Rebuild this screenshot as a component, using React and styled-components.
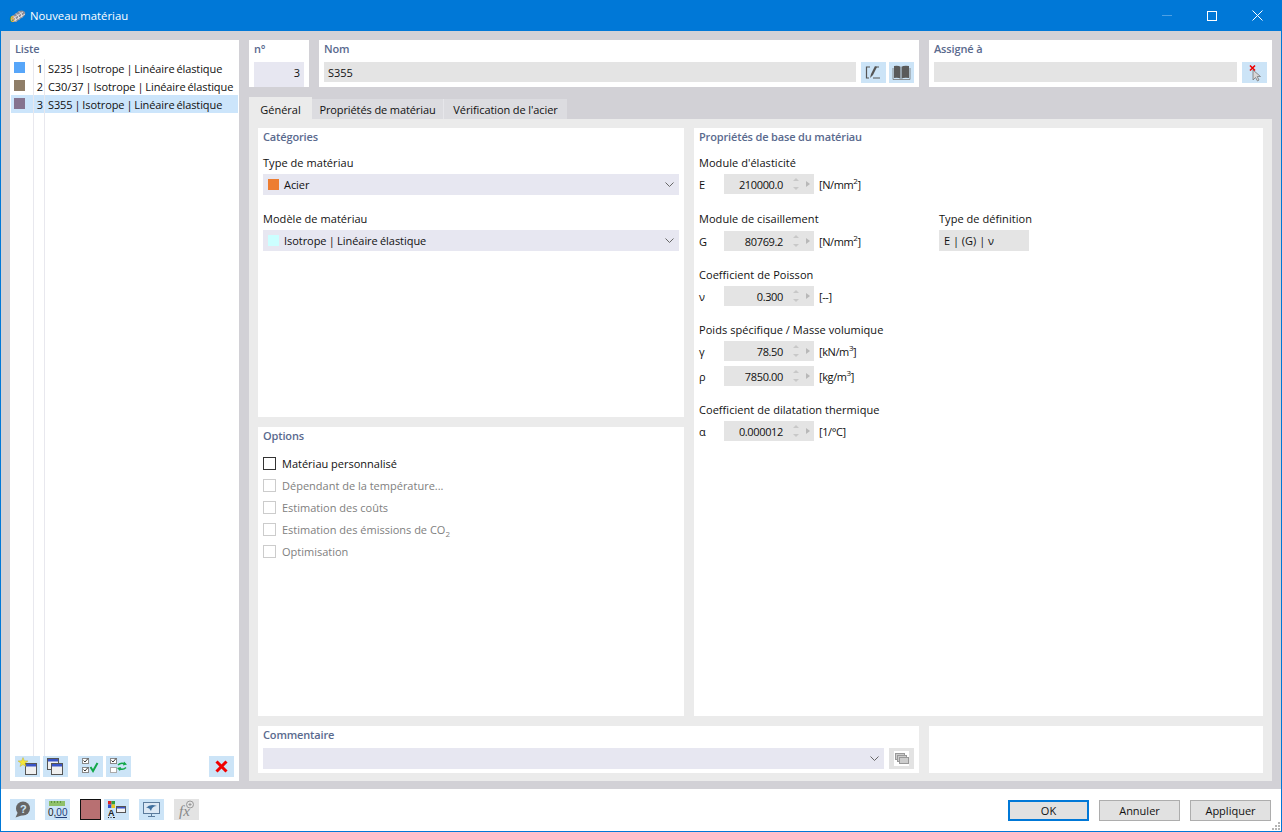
import React from "react";
import styled, { createGlobalStyle } from "styled-components";

const Global = createGlobalStyle`
    html, body {
        margin: 0;
        padding: 0;
        background: #ffffff;
    }
    #root {
        width: 1282px;
        height: 832px;
    }
`;

const Window = styled.div`
    width: 1282px;
    height: 832px;
    box-sizing: border-box;
    border: 1px solid #0078d7;
    border-top: none;
    display: flex;
    flex-direction: column;
    font-family: "Open Sans", "Noto Sans", sans-serif;
    font-size: 11px;
    color: #111;
    overflow: hidden;
`;

const TitleBar = styled.div`
    height: 31px;
    flex: none;
    margin: 0 -1px;
    background: #0078d7;
    color: #fff;
    display: flex;
    align-items: center;
    padding: 0 2px 0 9px;
    font-size: 11.3px;
`;

const TitleText = styled.span`
    margin-left: 4px;
    flex: 1;
`;

const WinButton = styled.div`
    width: 45px;
    height: 31px;
    box-sizing: border-box;
    padding-right: ${(p) => (p.$nudge ? 1 : 0)}px;
    display: flex;
    align-items: center;
    justify-content: center;
`;

const Body = styled.div`
    flex: 1;
    background: #d2d1d6;
    display: flex;
    gap: 10px;
    padding: 9px 9px 8px 9px;
    min-height: 0;
`;

const ListPanel = styled.div`
    width: 229px;
    flex: none;
    background: #fff;
    display: flex;
    flex-direction: column;
`;

const SectionTitle = styled.div`
    color: #5a6a8e;
    font-weight: 600;
    letter-spacing: -0.15px;
    line-height: 17px;
    height: 17px;
`;

const ListTitle = styled(SectionTitle)`
    padding-left: 5px;
`;

const ListRows = styled.div`
    flex: 1;
    margin: 2px 1px 0 1px;
    position: relative;
`;

const Guides = styled.div`
    position: absolute;
    top: 0;
    bottom: 0;
    left: 22px;
    width: 10px;
    border-left: 1px solid #e8e8ee;
    border-right: 1px solid #e8e8ee;
`;

const ListRow = styled.div`
    position: relative;
    height: 18px;
    display: flex;
    align-items: center;
    background: ${(p) => (p.$selected ? "#cce5fb" : "transparent")};
`;

const Swatch = styled.span`
    width: 11px;
    height: 11px;
    margin-left: 3px;
    align-self: flex-start;
    margin-top: 3px;
    flex: none;
    background: ${(p) => p.$color};
`;

const RowNumber = styled.span`
    width: 18px;
    text-align: right;
    flex: none;
`;

const RowName = styled.span`
    margin-left: 5px;
    white-space: nowrap;
    letter-spacing: -0.1px;
    word-spacing: -0.8px;
`;

const ListTools = styled.div`
    display: flex;
    align-items: center;
    height: 21px;
    padding: 0 5px;
    margin-bottom: 4px;
`;

const IconButton = styled.div`
    width: 25px;
    height: 21px;
    flex: none;
    background: ${(p) => (p.$off ? "#e3e3e3" : "#cce4f7")};
    display: flex;
    align-items: center;
    justify-content: center;
    margin-left: ${(p) => p.$ml || 0}px;
`;

const Main = styled.div`
    flex: 1;
    min-width: 0;
    display: flex;
    flex-direction: column;
`;

const TopRow = styled.div`
    display: flex;
    gap: 10px;
    height: 47px;
    flex: none;
`;

const TopCard = styled.div`
    background: #fff;
    display: flex;
    flex-direction: column;
    width: ${(p) => (p.$w ? p.$w + "px" : "auto")};
    flex: ${(p) => (p.$w ? "none" : 1)};
    padding: 0 5px;
    box-sizing: border-box;
`;

const CardTitle = styled(SectionTitle)`
    margin-bottom: 5px;
`;

const InputRow = styled.div`
    display: flex;
    gap: 5px;
`;

const TextField = styled.div`
    flex: 1;
    height: 20px;
    line-height: 22px;
    padding: 0 4px;
    background: ${(p) => (p.$blue ? "#e7e7f1" : "#e4e4e4")};
    text-align: ${(p) => (p.$right ? "right" : "left")};
`;

const TabStrip = styled.div`
    display: flex;
    align-items: flex-end;
    height: 32px;
    flex: none;
`;

const Tab = styled.div`
    width: ${(p) => p.$w}px;
    height: ${(p) => (p.$active ? 22 : 20)}px;
    line-height: ${(p) => (p.$active ? 26 : 22)}px;
    box-sizing: border-box;
    text-align: center;
    letter-spacing: ${(p) => (p.$active ? 0 : -0.1)}px;
    background: ${(p) => (p.$active ? "#ebebeb" : "#dcdce0")};
    border-left: ${(p) => (p.$split ? "1px solid #e6e6ea" : "none")};
    white-space: nowrap;
`;

const TabBody = styled.div`
    flex: 1;
    min-height: 0;
    background: #ebebeb;
    padding: 9px 9px 8px 9px;
    display: grid;
    grid-template-columns: 426px 1fr;
    grid-template-rows: 289px 289px 47px;
    gap: 10px;
`;

const Card = styled.div`
    background: #fff;
    padding: 0 5px;
    min-width: 0;
`;

const PropsCard = styled(Card)`
    grid-column: 2;
    grid-row: 1 / span 2;
`;

const CommentRow = styled.div`
    grid-column: 1 / span 2;
    display: grid;
    grid-template-columns: 661px 1fr;
    gap: 10px;
`;

const FieldLabel = styled.div`
    line-height: 16px;
    letter-spacing: 0.05px;
    margin-top: ${(p) => p.$mt || 0}px;
    margin-bottom: ${(p) => p.$mb || 3}px;
`;

const Combo = styled.div`
    height: 21px;
    background: #e7e7f1;
    display: flex;
    align-items: center;
    padding-left: 5px;
    flex: ${(p) => (p.$grow ? 1 : "none")};
`;

const ComboSwatch = styled.span`
    width: 11px;
    height: 11px;
    background: ${(p) => p.$color};
    margin-right: 5px;
`;

const ComboText = styled.span`
    flex: 1;
    letter-spacing: -0.05px;
    word-spacing: -0.5px;
`;

const ChevronIcon = styled.svg`
    width: 9px;
    height: 5px;
    margin-right: 5px;
`;

const Chevron = () => (
    <ChevronIcon viewBox="0 0 9 5">
        <path d="M0.5 0.5 L4.5 4.5 L8.5 0.5" fill="none" stroke="#666" strokeWidth="1" />
    </ChevronIcon>
);

const OptionList = styled.div`
    margin-top: 11px;
    display: flex;
    flex-direction: column;
    gap: 6px;
`;

const OptionRow = styled.div`
    display: flex;
    align-items: center;
    height: 16px;
    color: ${(p) => (p.$off ? "#808080" : "#111")};
    sub {
        font-size: 8px;
        line-height: 0;
    }
`;

const Check = styled.span`
    width: 11px;
    height: 11px;
    border: 1px solid ${(p) => (p.$off ? "#cccccc" : "#333333")};
    margin-right: 6px;
`;

const SplitRow = styled.div`
    display: grid;
    grid-template-columns: 240px 1fr;
`;

const ValueRow = styled.div`
    display: flex;
    align-items: center;
    height: 20px;
    margin-top: ${(p) => p.$mt || 0}px;
`;

const Symbol = styled.span`
    width: 25px;
    flex: none;
`;

const Spin = styled.div`
    width: 90px;
    height: 20px;
    background: #e4e4e4;
    display: flex;
    align-items: center;
    justify-content: flex-end;
    flex: none;
    letter-spacing: -0.35px;
`;

const SpinArrows = styled.svg`
    width: 24px;
    height: 14px;
    margin: 0 3px 0 4px;
    flex: none;
`;

const Unit = styled.span`
    margin-left: 5px;
    white-space: nowrap;
    letter-spacing: -0.4px;
    sup {
        font-size: 8px;
        line-height: 0;
    }
`;

const DefField = styled.div`
    width: 90px;
    height: 21px;
    line-height: 21px;
    padding-left: 5px;
    box-sizing: border-box;
    background: #e4e4e4;
`;

const Footer = styled.div`
    height: 42px;
    box-sizing: border-box;
    flex: none;
    display: flex;
    align-items: flex-start;
    padding: 10px 10px 0 9px;
    position: relative;
`;

const ColorChip = styled.div`
    width: 19px;
    height: 19px;
    background: #b87072;
    border: 1px solid #111;
    flex: none;
    margin-left: 10px;
`;

const Spacer = styled.div`
    flex: 1;
`;

const DialogButton = styled.div`
    text-align: center;
    background: #e1e1e1;
    border: ${(p) => (p.$primary ? "2px solid #0078d7" : "1px solid #adadad")};
    margin-top: 1px;
    margin-left: ${(p) => p.$ml || 0}px;
    height: ${(p) => (p.$primary ? 17 : 19)}px;
    width: ${(p) => (p.$primary ? 77 : 79)}px;
    line-height: ${(p) => (p.$primary ? 18 : 20)}px;
`;

const Grip = styled.svg`
    position: absolute;
    right: 0;
    bottom: 0;
`;

const arrows = (
    <SpinArrows viewBox="0 0 24 14">
        <path d="M6 4 L9 1 L12 4 Z" fill="#c8c8c8" />
        <path d="M6 10 L9 13 L12 10 Z" fill="#c8c8c8" />
        <path d="M19 4 L23 7 L19 10 Z" fill="#b8b8b8" />
    </SpinArrows>
);

const materials = [
    { n: 1, color: "#57a6f9", name: "S235 | Isotrope | Linéaire élastique" },
    { n: 2, color: "#8f7e68", name: "C30/37 | Isotrope | Linéaire élastique" },
    { n: 3, color: "#85738f", name: "S355 | Isotrope | Linéaire élastique", selected: true },
];

const options = [
    "Dépendant de la température...",
    "Estimation des coûts",
    <span>Estimation des émissions de CO<sub>2</sub></span>,
    "Optimisation",
];

const Value = ({ symbol, value, unit, mt }) => (
    <ValueRow $mt={mt}>
        <Symbol>{symbol}</Symbol>
        <Spin>
            {value}
            {arrows}
        </Spin>
        <Unit>{unit}</Unit>
    </ValueRow>
);

const Icon = ({ children }) => (
    <svg width="21" height="19" viewBox="0 0 21 19">
        {children}
    </svg>
);

const win = (x, y) => (
    <g transform={`translate(${x} ${y})`}>
        <rect x="0.5" y="0.5" width="11" height="11" fill="#f0f0f0" stroke="#555" />
        <rect x="1" y="1" width="10" height="2.5" fill="#3a55c8" />
    </g>
);

export default function App() {
    return (
        <>
            <Global />
            <Window>
                <TitleBar>
                    <svg width="17" height="19" viewBox="0 0 17 19">
                        <g transform="translate(0 3)">
                            <path d="M2 8 L10 2 Q14 0.5 16 3 Q17 6 14 8 L7 13 Q3 13 2 8 Z" fill="#8b8b96" />
                            <path d="M4 6.5 Q7 8 7 12.5 M7 4.5 Q10 6 10 10.5 M10 2.5 Q13 4 13 8.5 M3 10 L14 3 M5 12 L16 5" fill="none" stroke="#e6e6ea" strokeWidth="0.9" />
                        </g>
                        <text x="1" y="16" fontSize="8.5" fontWeight="700" fill="#e8b92e" fontFamily="Liberation Sans">6</text>
                    </svg>
                    <TitleText>Nouveau matériau</TitleText>
                    <WinButton $nudge>
                        <svg width="10" height="1"><rect width="10" height="1" fill="#4da0e4" /></svg>
                    </WinButton>
                    <WinButton $nudge>
                        <svg width="10" height="10"><rect x="0.5" y="0.5" width="9" height="9" fill="none" stroke="#fff" /></svg>
                    </WinButton>
                    <WinButton>
                        <svg width="11" height="11"><path d="M0.5 0.5 L10.5 10.5 M10.5 0.5 L0.5 10.5" stroke="#fff" /></svg>
                    </WinButton>
                </TitleBar>
                <Body>
                    <ListPanel>
                        <ListTitle>Liste</ListTitle>
                        <ListRows>
                            {materials.map((m) => (
                                <ListRow key={m.n} $selected={m.selected}>
                                    <Swatch $color={m.color} />
                                    <RowNumber>{m.n}</RowNumber>
                                    <RowName>{m.name}</RowName>
                                </ListRow>
                            ))}
                            <Guides />
                        </ListRows>
                        <ListTools>
                            <IconButton>
                                <Icon>
                                    {win(8, 6)}
                                    <path d="M6 0.5 L7.3 3.8 L11 4 L8 6.2 L9 9.5 L6 7.6 L3 9.5 L4 6.2 L1 4 L4.7 3.8 Z" fill="#f5e63a" stroke="#b8a520" strokeWidth="0.4" />
                                </Icon>
                            </IconButton>
                            <IconButton $ml={3}>
                                <Icon>
                                    {win(2, 1)}
                                    {win(6, 6)}
                                </Icon>
                            </IconButton>
                            <IconButton $ml={10}>
                                <Icon>
                                    <rect x="2.5" y="1.5" width="6" height="5" fill="#fff" stroke="#888" />
                                    <rect x="2.5" y="10.5" width="6" height="5" fill="#fff" stroke="#888" />
                                    <path d="M3.5 3.5 L5 5 L8 1.5 M3.5 12.5 L5 14 L8 10.5" fill="none" stroke="#333" />
                                    <path d="M10.5 10 L13 14 L17.5 6" fill="none" stroke="#13a84a" strokeWidth="2" />
                                </Icon>
                            </IconButton>
                            <IconButton $ml={3}>
                                <Icon>
                                    <rect x="2.5" y="1.5" width="6" height="5" fill="#fff" stroke="#888" />
                                    <rect x="2.5" y="10.5" width="6" height="5" fill="#fff" stroke="#aaa" />
                                    <path d="M3.5 3.5 L5 5 L8 1.5" fill="none" stroke="#333" />
                                    <path d="M10 8 Q13 5 17 7 M18 10.5 Q15 13.5 11 11.5" fill="none" stroke="#13a84a" strokeWidth="1.6" />
                                    <path d="M16 4.5 L19 7.5 L15 8.5 Z M12 14 L9 11 L13 10 Z" fill="#13a84a" />
                                </Icon>
                            </IconButton>
                            <Spacer />
                            <IconButton>
                                <svg width="13" height="13" viewBox="0 0 13 13">
                                    <path d="M1.5 1.5 L11.5 11.5 M11.5 1.5 L1.5 11.5" stroke="#f00000" strokeWidth="3" />
                                </svg>
                            </IconButton>
                        </ListTools>
                    </ListPanel>
                    <Main>
                        <TopRow>
                            <TopCard $w={60}>
                                <CardTitle>n°</CardTitle>
                                <TextField $blue $right>3</TextField>
                            </TopCard>
                            <TopCard $w={600}>
                                <CardTitle>Nom</CardTitle>
                                <InputRow>
                                    <TextField>S355</TextField>
                                    <IconButton>
                                        <Icon>
                                            <path d="M7 4 H3.5 V15 H6 M10 15 H17 M13 4 H16" fill="none" stroke="#555" strokeWidth="1.2" />
                                            <path d="M7 15 L8 11 L12 3 L14 4 L10 12 Z" fill="#555" />
                                        </Icon>
                                    </IconButton>
                                    <IconButton $ml={-2}>
                                        <Icon>
                                            <path d="M10 4 Q7 2 3 3 V15 Q7 14 10 16 Q13 14 18 15 V3 Q13 2 10 4 Z" fill="#5a5a5a" />
                                            <path d="M10 4 V16" stroke="#cce4f7" strokeWidth="1" />
                                            <path d="M2 5 V16.5 H19 V5" fill="none" stroke="#777" strokeWidth="0.8" />
                                        </Icon>
                                    </IconButton>
                                </InputRow>
                            </TopCard>
                            <TopCard>
                                <CardTitle>Assigné à</CardTitle>
                                <InputRow>
                                    <TextField />
                                    <IconButton>
                                        <Icon>
                                            <path d="M9 7 L9 17 L11.5 14.5 L13.5 18 L15 17 L13.2 13.5 L16.5 13.5 Z" fill="#d8d8d8" stroke="#777" strokeWidth="0.8" />
                                            <path d="M6 2.5 L11 7.5 M11 2.5 L6 7.5" stroke="#ee0000" strokeWidth="1.6" />
                                        </Icon>
                                    </IconButton>
                                </InputRow>
                            </TopCard>
                        </TopRow>
                        <TabStrip>
                            <Tab $active $w={63}>Général</Tab>
                            <Tab $w={131}>Propriétés de matériau</Tab>
                            <Tab $split $w={124}>Vérification de l'acier</Tab>
                        </TabStrip>
                        <TabBody>
                            <Card>
                                <SectionTitle>Catégories</SectionTitle>
                                <FieldLabel $mt={10}>Type de matériau</FieldLabel>
                                <Combo>
                                    <ComboSwatch $color="#ed7d31" />
                                    <ComboText>Acier</ComboText>
                                    <Chevron />
                                </Combo>
                                <FieldLabel $mt={16}>Modèle de matériau</FieldLabel>
                                <Combo>
                                    <ComboSwatch $color="#ccffff" />
                                    <ComboText>Isotrope | Linéaire élastique</ComboText>
                                    <Chevron />
                                </Combo>
                            </Card>
                            <PropsCard>
                                <SectionTitle>Propriétés de base du matériau</SectionTitle>
                                <FieldLabel $mt={10}>Module d'élasticité</FieldLabel>
                                <Value symbol="E" value="210000.0" unit={<>[N/mm<sup>2</sup>]</>} />
                                <SplitRow>
                                    <div>
                                        <FieldLabel $mt={17} $mb={4}>Module de cisaillement</FieldLabel>
                                        <Value symbol="G" value="80769.2" unit={<>[N/mm<sup>2</sup>]</>} />
                                    </div>
                                    <div>
                                        <FieldLabel $mt={17}>Type de définition</FieldLabel>
                                        <DefField>E | (G) | ν</DefField>
                                    </div>
                                </SplitRow>
                                <FieldLabel $mt={16}>Coefficient de Poisson</FieldLabel>
                                <Value symbol="ν" value="0.300" unit="[--]" />
                                <FieldLabel $mt={16}>Poids spécifique / Masse volumique</FieldLabel>
                                <Value symbol="γ" value="78.50" unit={<>[kN/m<sup>3</sup>]</>} />
                                <Value mt={5} symbol="ρ" value="7850.00" unit={<>[kg/m<sup>3</sup>]</>} />
                                <FieldLabel $mt={16}>Coefficient de dilatation thermique</FieldLabel>
                                <Value symbol="α" value="0.000012" unit="[1/°C]" />
                            </PropsCard>
                            <Card>
                                <SectionTitle>Options</SectionTitle>
                                <OptionList>
                                    <OptionRow>
                                        <Check />
                                        Matériau personnalisé
                                    </OptionRow>
                                    {options.map((label, i) => (
                                        <OptionRow key={i} $off>
                                            <Check $off />
                                            {label}
                                        </OptionRow>
                                    ))}
                                </OptionList>
                            </Card>
                            <CommentRow>
                                <Card>
                                    <CardTitle>Commentaire</CardTitle>
                                    <InputRow>
                                        <Combo $grow>
                                            <ComboText />
                                            <Chevron />
                                        </Combo>
                                        <IconButton $off>
                                            <Icon>
                                                <rect x="3" y="2" width="15" height="15" fill="#fff" />
                                                <rect x="4.5" y="4.5" width="9" height="6" fill="#ccc" stroke="#999" />
                                                <rect x="6.5" y="6.5" width="9" height="6" fill="#ccc" stroke="#999" />
                                                <rect x="8.5" y="8.5" width="9" height="6" fill="#ccc" stroke="#999" />
                                            </Icon>
                                        </IconButton>
                                    </InputRow>
                                </Card>
                                <Card />
                            </CommentRow>
                        </TabBody>
                    </Main>
                </Body>
                <Footer>
                    <IconButton>
                        <Icon>
                            <circle cx="11" cy="8.5" r="7" fill="#666" />
                            <path d="M6 12 L3.5 17.5 L11 15 Z" fill="#666" />
                            <text x="8" y="12.5" fontSize="11" fontWeight="700" fill="#cce4f7" fontFamily="Liberation Sans">?</text>
                        </Icon>
                    </IconButton>
                    <IconButton $ml={10}>
                        <Icon>
                            <rect x="2" y="1" width="16" height="5" fill="#8fc06a" />
                            <path d="M4.5 1 V3 M7.5 1 V3 M10.5 1 V3 M13.5 1 V3" stroke="#5f9440" />
                            <text x="1" y="16" fontSize="10" fill="#222" fontFamily="Liberation Sans">0,<tspan fill="#24407a">00</tspan></text>
                            <path d="M8.5 17.5 H20" stroke="#24407a" />
                        </Icon>
                    </IconButton>
                    <ColorChip />
                    <IconButton $ml={3}>
                        <Icon>
                            <rect x="2" y="1" width="3.5" height="3.5" fill="#e02020" />
                            <rect x="5.5" y="1" width="3.5" height="3.5" fill="#2f9e3f" />
                            <rect x="2" y="4.5" width="3.5" height="3.5" fill="#2f50d0" />
                            <rect x="5.5" y="4.5" width="3.5" height="3.5" fill="#e8c820" />
                            <rect x="10.5" y="6.5" width="9" height="6" fill="#f4f4f4" stroke="#555" />
                            <rect x="11" y="7" width="8" height="1.5" fill="#3a55c8" />
                            <text x="2" y="16" fontSize="9" fontWeight="700" fill="#222" fontFamily="Liberation Sans">A</text>
                            <path d="M2 17.5 H3 M4.5 17.5 H5.5 M7 17.5 H9" stroke="#222" />
                        </Icon>
                    </IconButton>
                    <IconButton $ml={10}>
                        <Icon>
                            <rect x="2.5" y="2.5" width="16" height="11" fill="#dce8f4" stroke="#5b7b9c" />
                            <path d="M5 8 Q9 3 16 6 Q11 6 10 11 Q8 7 5 8 Z" fill="#3f6f9e" />
                            <path d="M10.5 14 V16 M7 16.5 H14" stroke="#5b7b9c" />
                        </Icon>
                    </IconButton>
                    <IconButton $ml={10} $off>
                        <Icon>
                            <text x="3" y="16" fontSize="15" fontStyle="italic" fill="#888" fontFamily="Liberation Serif">fx</text>
                            <circle cx="14" cy="4.5" r="3.5" fill="none" stroke="#999" />
                            <path d="M12.5 4.5 H15.5 M14 3 V6" stroke="#999" />
                        </Icon>
                    </IconButton>
                    <Spacer />
                    <DialogButton $primary>OK</DialogButton>
                    <DialogButton $ml={10}>Annuler</DialogButton>
                    <DialogButton $ml={10}>Appliquer</DialogButton>
                    <Grip width="10" height="10" viewBox="0 0 10 10">
                        <path d="M7 1h2v2H7zM4 4h2v2H4zM7 4h2v2H7zM1 7h2v2H1zM4 7h2v2H4zM7 7h2v2H7z" fill="#b5b5b5" />
                    </Grip>
                </Footer>
            </Window>
        </>
    );
}
